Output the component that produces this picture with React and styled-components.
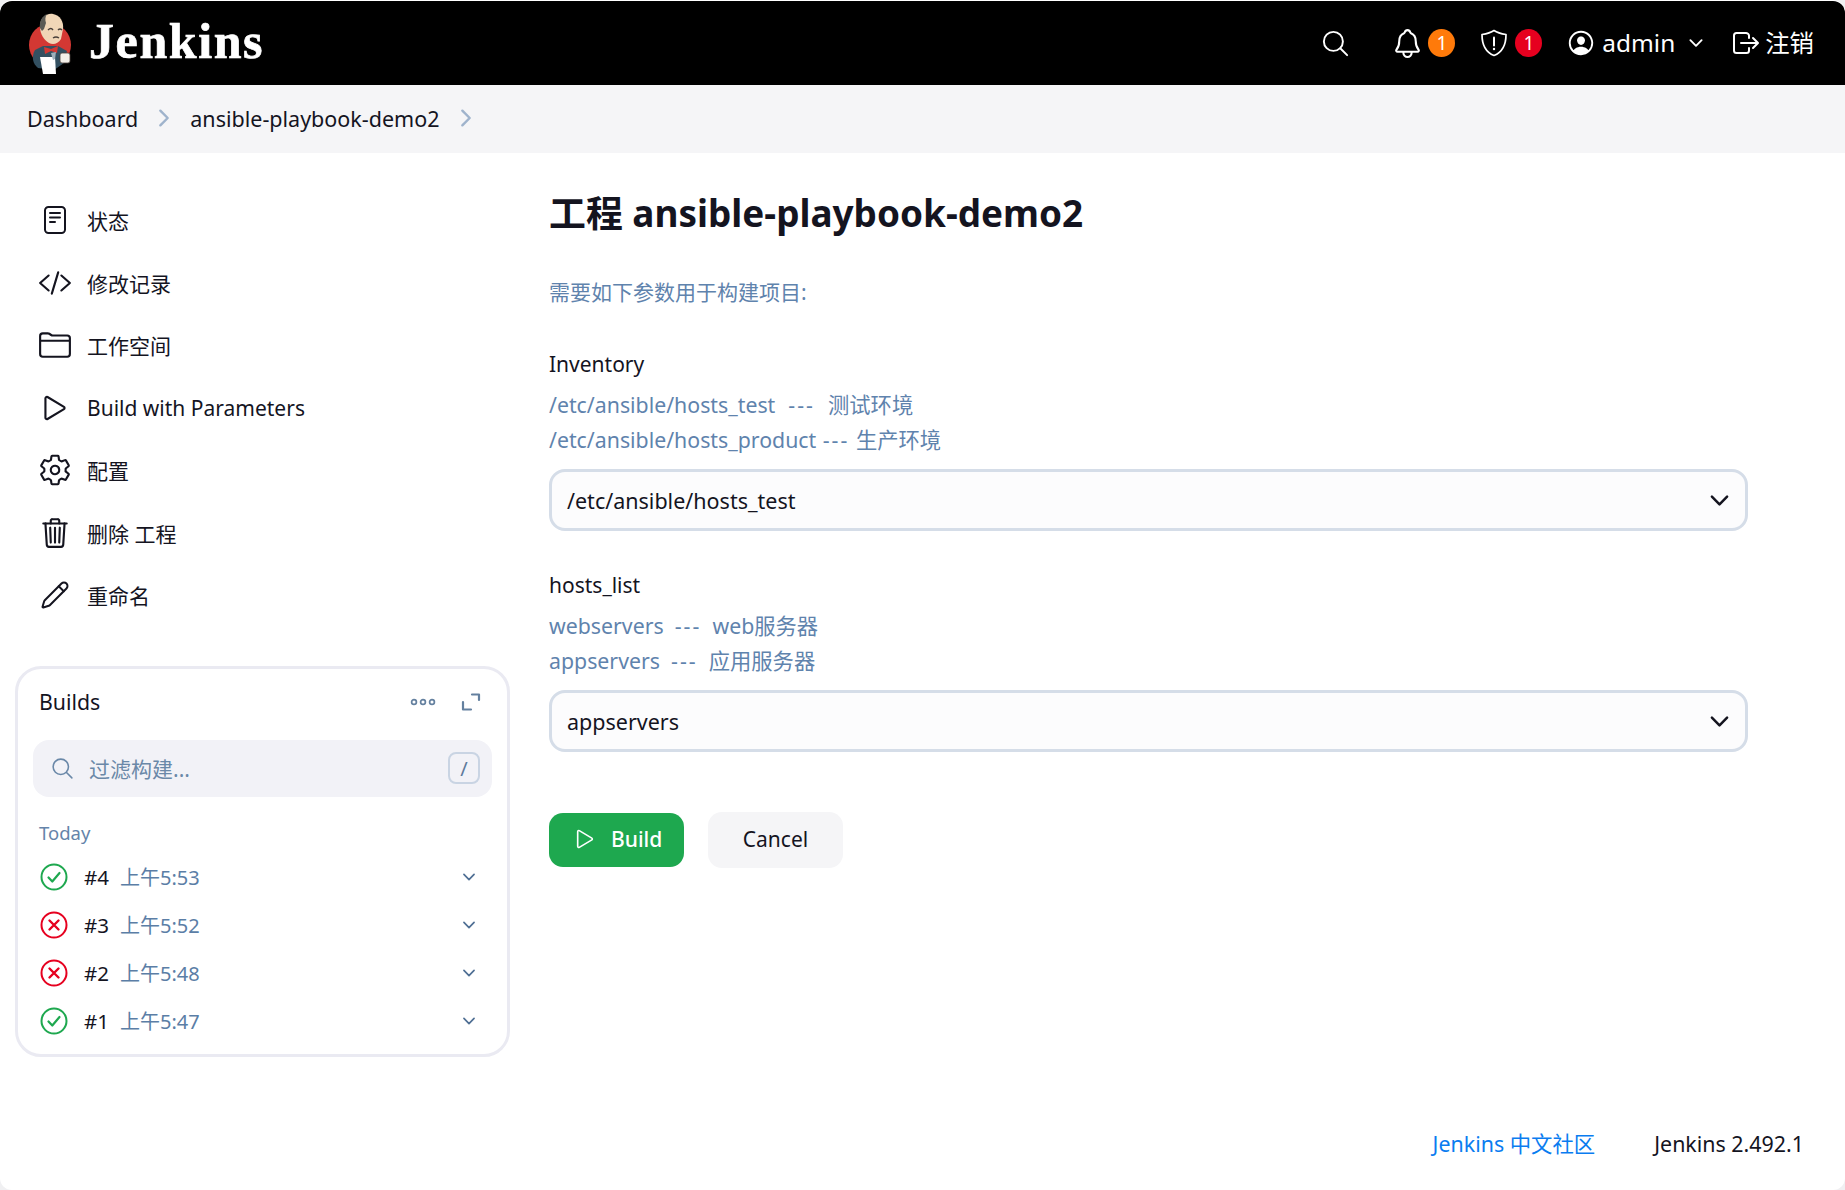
import React from 'react';
import styled, { createGlobalStyle } from 'styled-components';
import {
  IoSearchOutline, IoNotificationsOutline, IoPersonCircleOutline, IoLogOutOutline, IoChevronDown,
  IoChevronForward, IoCodeSlashOutline, IoFolderOutline, IoPlayOutline,
  IoSettingsOutline, IoTrashOutline,
} from 'react-icons/io5';
import { Pencil } from 'lucide-react';

const FONT = '"Noto Sans", "Noto Sans CJK SC", sans-serif';

const Global = createGlobalStyle`
  html, body { margin: 0; padding: 0; background: #f0f0f2; }
  * { box-sizing: border-box; }
  body { font-family: ${FONT}; color: #14141f; }
`;

const Page = styled.div`
  width: 1845px; height: 1190px; background: #fff; border-radius: 12px; overflow: hidden;
  display: flex; flex-direction: column; padding-top: 1px;
`;
const Header = styled.header`
  height: 84px; flex: none; background: #000; color: #fff; display: flex; align-items: center;
  padding: 0 31px 0 28px; border-radius: 12px 12px 0 0;
`;
const Brand = styled.div`display: flex; align-items: center; gap: 17px; margin-right: auto;`;
const Wordmark = styled.span`
  font-family: "Liberation Serif", serif; font-weight: 700; font-size: 50px; line-height: 1; letter-spacing: 1.6px; color: #fff;
  -webkit-text-stroke: 0.7px #fff; margin-top: -4px;
`;
const HeadItem = styled.div`
  display: flex; align-items: center; gap: ${p => p.$gap || 4}px; margin-left: ${p => p.$ml}px; font-size: 24.4px; line-height: 30px;
`;
const Badge = styled.span`
  width: 27px; height: 28px; border-radius: 50%; background: ${p => p.$bg}; display: flex; align-items: center; justify-content: center;
  font-size: 19px; color: #fff;
`;
const Crumbs = styled.nav`
  height: 68px; flex: none; background: #f5f5f7; display: flex; align-items: center; padding: 0 0 2px 27px; font-size: 21.5px;
`;
const CrumbLink = styled.span`color: #14141f;`;
const CrumbSep = styled.span`display: flex; color: #9fb3cc; margin: 0 ${p => p.$mr || 0}px 0 ${p => p.$ml}px;`;
const Body = styled.div`flex: 1; display: flex; min-height: 0;`;
const Side = styled.aside`width: 549px; flex: none; padding: 36px 0 0 15px;`;
const Tasks = styled.div`display: flex; flex-direction: column;`;
const Task = styled.div`
  height: 62.5px; display: flex; align-items: center; gap: 15px; padding-left: 23px; font-size: 21px; color: #14141f;
`;
const TaskIcon = styled.span`width: 34px; height: 34px; display: flex; align-items: center; justify-content: center; color: #14141f;`;
const Card = styled.section`
  width: 495px; height: 391px; margin-top: 39px; border: 3px solid #eaeaf2; border-radius: 26px; padding: 0 15px;
`;
const CardHead = styled.div`
  height: 60px; display: flex; align-items: center; padding: 0 11px 0 6px; font-size: 21.3px; margin-top: 3px;
`;
const CardTitle = styled.span`margin-right: auto;`;
const CardTool = styled.span`display: flex; color: #64809f; margin-left: ${p => p.$ml || 0}px;`;
const Search = styled.div`
  height: 57px; margin-top: 8px; background: #f2f2f7; border-radius: 16px; display: flex; align-items: center; padding: 0 12px 0 17px;
  color: #6a88a8; font-size: 21px; gap: 14px;
`;
const SearchText = styled.span`flex: 1;`;
const Key = styled.span`
  width: 32px; height: 32px; border: 2px solid #c9d4e3; border-radius: 8px; display: flex; align-items: center; justify-content: center;
  font-size: 20px; color: #5e7a9c;
`;
const Today = styled.div`margin: 23px 0 7px 6px; font-size: 18.5px; line-height: 26px; color: #6484aa;`;
const Build = styled.div`height: 48px; display: flex; align-items: center; padding: 0 14px 0 7px; font-size: 20.5px;`;
const BuildNo = styled.span`width: 36px; margin-left: 16px; flex: none;`;
const BuildTime = styled.span`color: #5b7ea6; flex: 1; font-size: 20px;`;
const Chevron = styled.span`display: flex; color: #4f6f94;`;
const Main = styled.main`flex: 1; display: flex; flex-direction: column; padding: 0 97px 0 0;`;
const Title = styled.h1`
  margin: 34px 0 0; font-size: 36.9px; line-height: 52px; font-weight: 700; color: #14141f;
`;
const Desc = styled.p`margin: 38px 0 0; font-size: 21px; line-height: 30px; color: #5f83ad;`;
const Param = styled.div`margin-top: ${p => p.$mt}px;`;
const Label = styled.div`font-size: 21px; line-height: 30px; color: #14141f;`;
const Help = styled.div`
  margin-top: 8px; font-size: 21.3px; line-height: 35px; color: #5f83ad; white-space: pre; word-spacing: ${p => p.$ws}px;
`;
const Dash = styled.span`letter-spacing: 2px;`;
const Select = styled.div`
  height: 62px; margin-top: 12px; border: 3px solid #d5dde8; border-radius: 16px; background: #fcfcfd; display: flex; align-items: center;
  padding: 0 12px 0 15px; font-size: 21.5px; justify-content: space-between; color: #14141f;
`;
const Actions = styled.div`display: flex; align-items: center; gap: 24px; margin-top: 60px;`;
const Primary = styled.button`
  width: 135px; height: 54px; background: #1ea84f; color: #fff; border: 0; border-radius: 14px; font: 500 21px ${FONT};
  display: flex; align-items: center; gap: 13px; padding: 0 0 2px 23px;
`;
const Secondary = styled.button`
  width: 135px; height: 56px; background: #f5f5f7; color: #14141f; border: 0; border-radius: 14px; padding: 0 0 2px; font: 400 21px ${FONT};
`;
const Footer = styled.footer`
  height: 75px; flex: none; display: flex; align-items: baseline; justify-content: flex-end; gap: 59px; padding: 14px 41px 0 0;
  font-size: 21.4px; line-height: 30px; color: #14141f; margin-top: auto;
`;
const FootLink = styled.span`color: #0a7cf0;`;

const Logo = () => (
  <svg width="44" height="63" viewBox="0 0 44 63">
    <ellipse cx="22" cy="33" rx="21" ry="21.5" fill="#d33833" />
    <path d="M7 38C3 45 5 52 10 56l16 2 10-7 3-12-9-5H15z" fill="#335061" />
    <path d="M12 15C12 6 18 1 25 2c7 1 11 8 10 15l-2 10c-3 5-8 6-12 4-5-3-9-9-9-16z" fill="#f0d6b7" />
    <path d="M12 16C11 8 15 4 19 2c-2 3-2 6-1 9l-2 6-2 2z" fill="#5a5a55" />
    <path d="M20 18q3-3 5 0M30 18q2-2 4 0M25 26q3-2 6 0" fill="none" stroke="#49403a" strokeWidth="1.4" />
    <path d="M16 35l7 2 7-3-1 7-6-2-6 3z" fill="#d33833" />
    <path d="M12 45h15l1 17H15z" fill="#fff" />
    <rect x="32" y="41" width="10" height="10" rx="2" fill="#f3efe8" stroke="#49403a" strokeWidth="0.8" />
    <path d="M23 41l5-1-1 7-2 1z" fill="#9fb0bb" />
  </svg>
);

const Shield = () => (
  <svg width="26" height="28" viewBox="0 0 26 28" fill="none" stroke="#fff" strokeWidth="1.7" strokeLinejoin="round">
    <path d="M13 1.5c3 2 7 3.2 12 4C25 16 22 23 13 26.5 4 23 1 16 1 5.5c5-.8 9-2 12-4z" />
    <path d="M13 8.5v8" strokeWidth="2" strokeLinecap="round" />
    <circle cx="13" cy="20" r="1.2" fill="#fff" stroke="none" />
  </svg>
);

const Doc = () => (
  <svg width="24" height="30" viewBox="0 0 24 30" fill="none" stroke="currentColor" strokeWidth="2" strokeLinecap="round">
    <rect x="2" y="2" width="20" height="26" rx="3.5" />
    <path d="M7 8h10M7 12.5h10M7 17h5" />
  </svg>
);

const Dots = () => (
  <svg width="26" height="10" viewBox="0 0 26 10" fill="none" stroke="currentColor" strokeWidth="1.7">
    <circle cx="4" cy="5" r="2.4" /><circle cx="13" cy="5" r="2.4" /><circle cx="22" cy="5" r="2.4" />
  </svg>
);
const Expand = () => (
  <svg width="20" height="20" viewBox="0 0 20 20" fill="none" stroke="currentColor" strokeWidth="2.2" strokeLinecap="round" strokeLinejoin="round">
    <path d="M2 10v7.5h8M11 2.5h7V8" />
  </svg>
);
const Status = ({ ok }) => {
  const c = ok ? '#1ea84f' : '#e6001f';
  return (
    <svg width="28" height="28" viewBox="0 0 28 28" fill="none" stroke={c} strokeWidth="2" strokeLinecap="round" strokeLinejoin="round">
      <circle cx="14" cy="14" r="12.5" />
      {ok ? <path d="M8.5 14.5l3.8 4 7.2-8.5" strokeWidth="2.2" /> : <path d="M9.5 9.5l9 9M18.5 9.5l-9 9" strokeWidth="2.4" />}
    </svg>
  );
};

const tasks = [
  [<Doc />, '状态'],
  [<IoCodeSlashOutline size={34} />, '修改记录'],
  [<IoFolderOutline size={36} />, '工作空间'],
  [<IoPlayOutline size={36} />, 'Build with Parameters'],
  [<IoSettingsOutline size={34} />, '配置'],
  [<IoTrashOutline size={34} />, '删除 工程'],
  [<Pencil size={30} strokeWidth={1.6} />, '重命名'],
];
const builds = [
  ['#4', '上午5:53', true], ['#3', '上午5:52', false], ['#2', '上午5:48', false], ['#1', '上午5:47', true],
];

export default function App() {
  return (
    <Page>
      <Global />
      <Header>
        <Brand><Logo /><Wordmark>Jenkins</Wordmark></Brand>
        <HeadItem><IoSearchOutline size={31} /></HeadItem>
        <HeadItem $ml={40}><IoNotificationsOutline size={33} /><Badge $bg="#ff7a0a">1</Badge></HeadItem>
        <HeadItem $ml={26} $gap={8}><Shield /><Badge $bg="#e6001f">1</Badge></HeadItem>
        <HeadItem $ml={24} $gap={6}><IoPersonCircleOutline size={30} />admin<IoChevronDown size={20} style={{ marginLeft: 5 }} /></HeadItem>
        <HeadItem $ml={24} $gap={3}><IoLogOutOutline size={32} />注销</HeadItem>
      </Header>
      <Crumbs>
        <CrumbLink>Dashboard</CrumbLink>
        <CrumbSep $ml={13} $mr={13}><IoChevronForward size={26} /></CrumbSep>
        <CrumbLink>ansible-playbook-demo2</CrumbLink>
        <CrumbSep $ml={13}><IoChevronForward size={26} /></CrumbSep>
      </Crumbs>
      <Body>
        <Side>
          <Tasks>
            {tasks.map(([icon, label]) => (
              <Task key={label}><TaskIcon>{icon}</TaskIcon>{label}</Task>
            ))}
          </Tasks>
          <Card>
            <CardHead>
              <CardTitle>Builds</CardTitle>
              <CardTool><Dots /></CardTool>
              <CardTool $ml={25}><Expand /></CardTool>
            </CardHead>
            <Search>
              <IoSearchOutline size={25} />
              <SearchText>过滤构建...</SearchText>
              <Key>/</Key>
            </Search>
            <Today>Today</Today>
            {builds.map(([no, time, ok]) => (
              <Build key={no}>
                <Status ok={ok} />
                <BuildNo>{no}</BuildNo>
                <BuildTime>{time}</BuildTime>
                <Chevron><IoChevronDown size={18} /></Chevron>
              </Build>
            ))}
          </Card>
        </Side>
        <Main>
          <Title>工程 ansible-playbook-demo2</Title>
          <Desc>需要如下参数用于构建项目:</Desc>
          <Param $mt={42}>
            <Label>Inventory</Label>
            <Help $ws={1}>/etc/ansible/hosts_test  <Dash>---</Dash>  测试环境{'\n'}/etc/ansible/hosts_product <Dash>---</Dash> 生产环境</Help>
            <Select>/etc/ansible/hosts_test<IoChevronDown size={27} color="#14141f" /></Select>
          </Param>
          <Param $mt={39}>
            <Label>hosts_list</Label>
            <Help $ws={0}>webservers  <Dash>---</Dash>  web服务器{'\n'}appservers  <Dash>---</Dash>  应用服务器</Help>
            <Select>appservers<IoChevronDown size={27} color="#14141f" /></Select>
          </Param>
          <Actions>
            <Primary><IoPlayOutline size={26} />Build</Primary>
            <Secondary>Cancel</Secondary>
          </Actions>
        </Main>
      </Body>
      <Footer>
        <FootLink>Jenkins 中文社区</FootLink>
        <span>Jenkins 2.492.1</span>
      </Footer>
    </Page>
  );
}
